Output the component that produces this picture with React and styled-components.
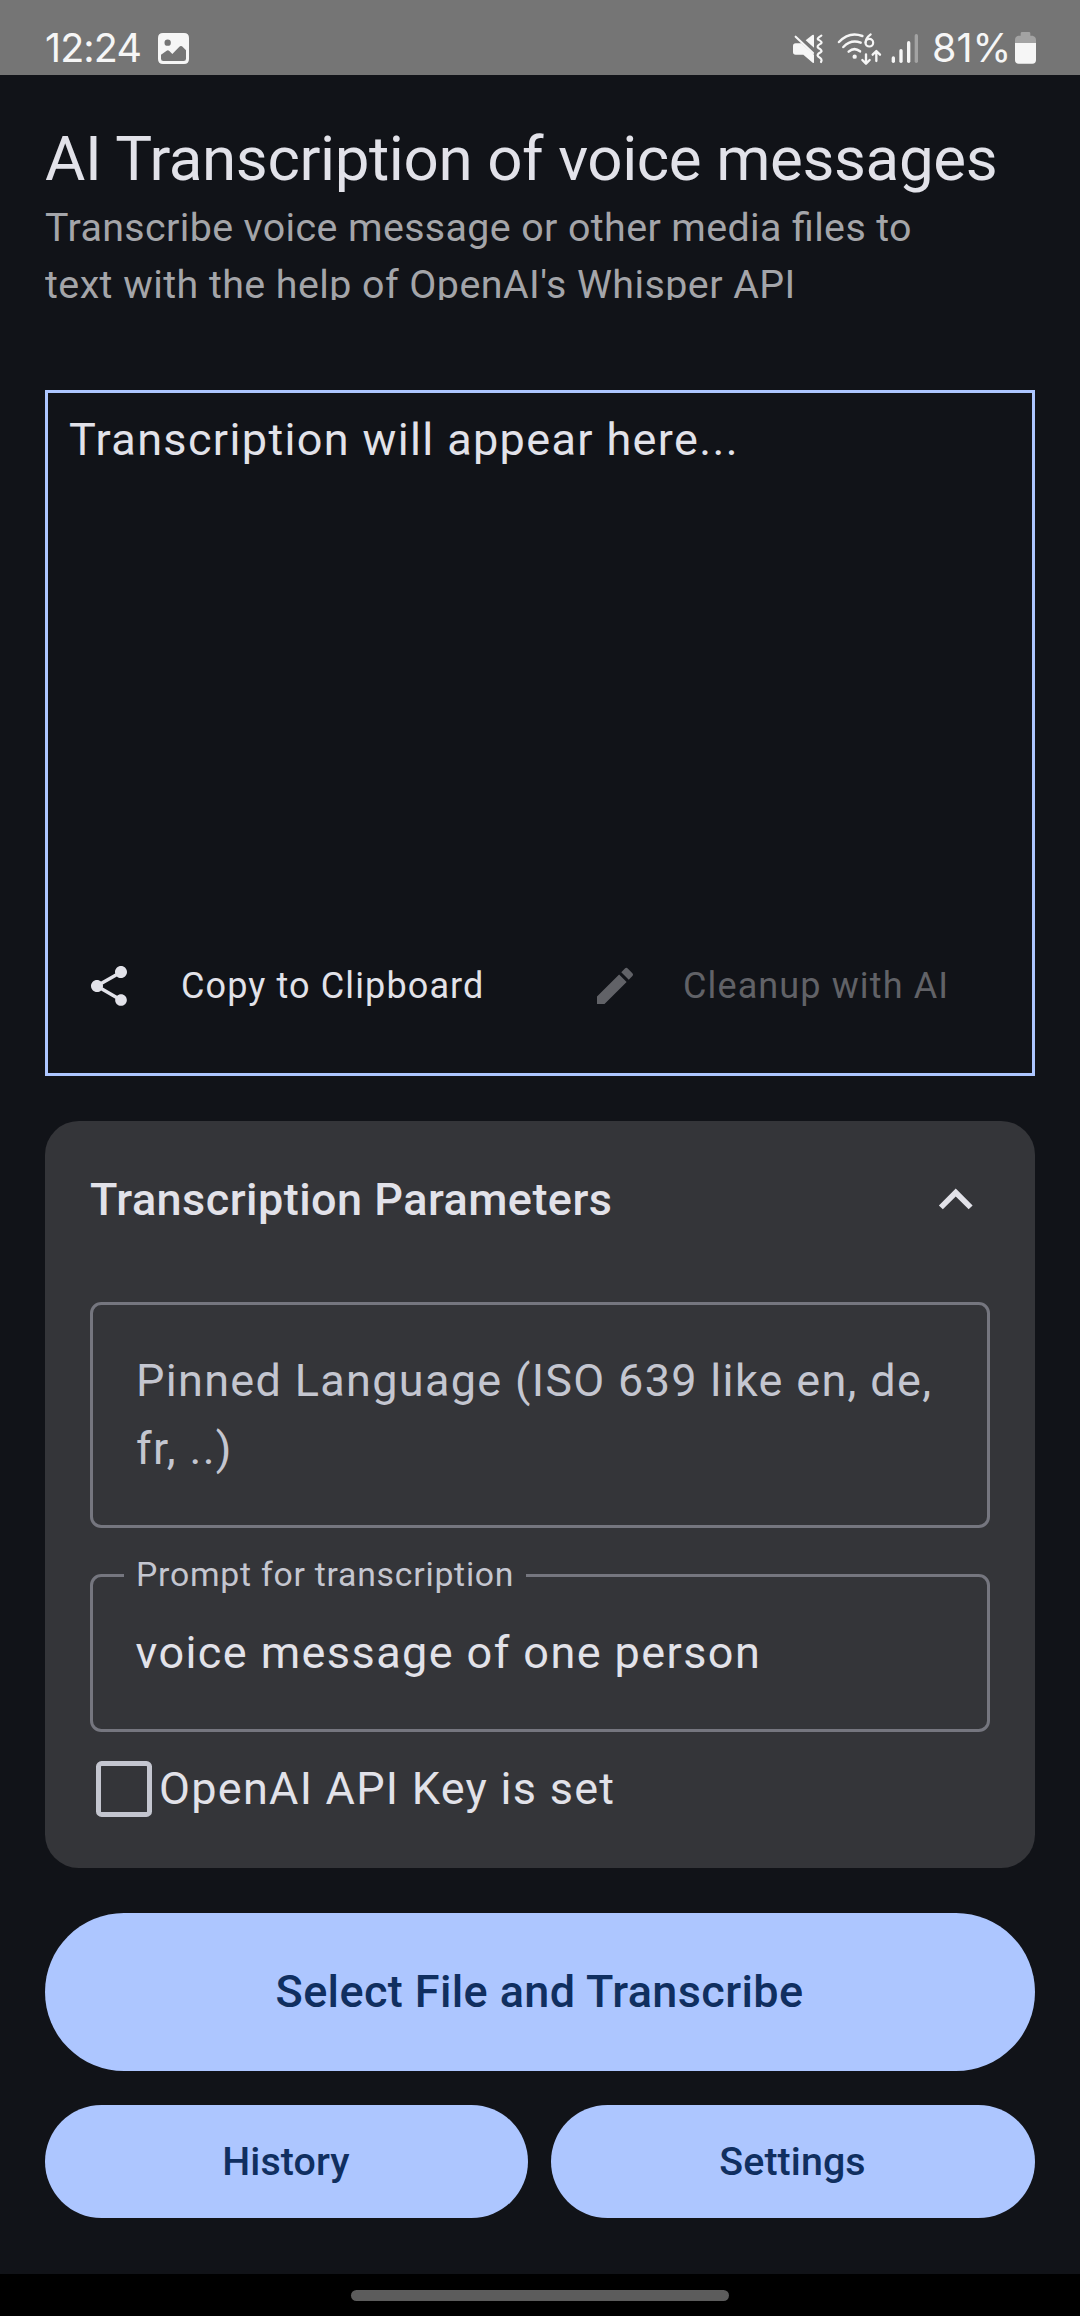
import React from "react";
import styled, { createGlobalStyle } from "styled-components";
import { MdShare, MdEdit, MdExpandLess } from "react-icons/md";

const Global = createGlobalStyle`
  * { box-sizing: border-box; }
  body { margin: 0; background: #111318; }
`;

const Screen = styled.div`
  width: 1080px;
  height: 2316px;
  display: flex;
  flex-direction: column;
  background: #111318;
  color: #e2e2e9;
  font-family: Roboto, "Noto Sans", sans-serif;
  overflow: hidden;
`;

const StatusBar = styled.header`
  height: 75px;
  flex: none;
  background: #757575;
  color: #f6f6f6;
  display: flex;
  align-items: flex-start;
  padding: 32px 43px 0 45px;
  font-family: Inter, Roboto, sans-serif;
`;

const StatusText = styled.span`
  font-size: 39.5px;
  line-height: 32px;
  letter-spacing: ${(p) => p.$spacing}px;
  width: ${(p) => p.$width}px;
  margin-left: ${(p) => p.$gap || 0}px;
  white-space: nowrap;
`;

const Glyph = styled.svg`
  display: block;
  flex: none;
  width: ${(p) => p.$w}px;
  height: 34px;
  margin-left: ${(p) => p.$gap || 0}px;
`;

const Spacer = styled.div`
  flex: 1;
`;

const Main = styled.main`
  flex: 1;
  display: flex;
  flex-direction: column;
  padding: 44px 45px 0;
`;

const Title = styled.h1`
  margin: 0;
  font-size: 61.875px;
  font-weight: 400;
  line-height: 80px;
  letter-spacing: -0.38px;
  white-space: nowrap;
`;

const Subtitle = styled.p`
  margin: 0;
  height: 101px;
  overflow: hidden;
  color: #a4a5a9;
  font-size: 39.375px;
  line-height: 57px;
`;

const SubtitleLine = styled.span`
  display: block;
  letter-spacing: ${(p) => p.$spacing}px;
  font-feature-settings: "liga" 1;
  white-space: nowrap;
`;

const Output = styled.section`
  margin-top: 90px;
  height: 686px;
  flex: none;
  border: 3px solid #adc6ff;
  padding: 13px 20px 0 21px;
  display: flex;
  flex-direction: column;
  justify-content: space-between;
`;

const BodyText = styled.div`
  font-size: 45px;
  line-height: 68px;
  letter-spacing: ${(p) => p.$spacing}px;
  white-space: nowrap;
`;

const Actions = styled.div`
  display: flex;
  align-items: center;
  height: 68px;
  margin-bottom: 53px;
`;

const Action = styled.button`
  border: 0;
  background: none;
  padding: 0 0 0 ${(p) => p.$inset}px;
  width: ${(p) => p.$width}px;
  display: flex;
  align-items: center;
  gap: ${(p) => p.$gap}px;
  color: ${(p) => (p.$muted ? "#616267" : "#e2e2e9")};
  font: 400 36px/54px Roboto, sans-serif;
  letter-spacing: 1.12px;
  white-space: nowrap;
  svg { flex: none; }
`;

const Card = styled.section`
  margin-top: 45px;
  height: 747px;
  flex: none;
  border-radius: 33.75px;
  background: #343539;
  padding: 45px 45px 0;
`;

const CardHeader = styled.div`
  display: flex;
  align-items: center;
  justify-content: space-between;
  height: 68px;
  padding-right: 1px;
`;

const CardTitle = styled.h2`
  margin: 0;
  font-size: 45px;
  font-weight: 500;
  line-height: 68px;
  letter-spacing: 0.46px;
`;

const Field = styled.fieldset`
  margin: ${(p) => p.$top}px 0 0;
  min-width: 0;
  height: ${(p) => p.$height}px;
  border: 3px solid #75767f;
  border-radius: 11.25px;
  padding: ${(p) => p.$pad}px 31px 0 ${(p) => (p.$placeholder ? 43 : 42.5)}px;
  font-size: 45px;
  line-height: 67.5px;
  letter-spacing: ${(p) => (p.$placeholder ? 1.32 : 1.42)}px;
  color: ${(p) => (p.$placeholder ? "#c4c6d0" : "#e2e2e9")};
`;

const Legend = styled.legend`
  margin-left: -11.5px;
  padding: 0 12px 2px 12px;
  font-size: 33.75px;
  line-height: 43px;
  letter-spacing: 0.76px;
  color: #c4c6d0;
`;

const CheckRow = styled.label`
  display: flex;
  align-items: center;
  margin: 23px 0 0 6px;
  height: 68px;
  gap: 7px;
`;

const Box = styled.span`
  width: 56px;
  height: 56px;
  border: 5px solid #c4c6d0;
  border-radius: 5.6px;
`;

const Button = styled.button`
  border: 0;
  border-radius: 79px;
  background: #adc6ff;
  color: #102f60;
  height: ${(p) => (p.$large ? 158 : 113)}px;
  flex: none;
  margin-top: ${(p) => (p.$large ? 45 : 0)}px;
  padding: 0 1px ${(p) => (p.$large ? 2 : 0)}px 0;
  font: 500 ${(p) => (p.$large ? 45 : 39.375)}px Roboto, sans-serif;
  letter-spacing: ${(p) => (p.$large ? 0.38 : 0.1)}px;
`;

const ButtonRow = styled.div`
  display: grid;
  grid-template-columns: 483px 484px;
  gap: 23px;
  margin-top: 34px;
`;

const NavBar = styled.footer`
  height: 42px;
  flex: none;
  background: #000;
  display: flex;
  justify-content: center;
  padding-top: 16px;
`;

const Handle = styled.div`
  width: 378px;
  height: 11px;
  border-radius: 5.5px;
  background: #5c5c5c;
`;

const Photo = () => (
  <Glyph $w={32} $gap={16} viewBox="474 96 96 102">
    <path
      fill="#f6f6f6"
      fillRule="evenodd"
      d="M489 99H552Q567 99 567 114V177Q567 192 552 192H489Q474 192 474 177V114Q474 99 489 99ZM503 118.500A9.500 9.500 0 1 0 503 137.500A9.500 9.500 0 1 0 503 118.500ZM483 164V176Q483 183 490 183H551Q558 183 558 176V151L546 139Q542 136 538 140L517 162L508 153Q504 149 500 152Z"
    />
  </Glyph>
);

const Muted = () => (
  <Glyph $w={32} viewBox="66 96 96 102">
    <g fill="#f6f6f6">
      <path d="M77 130H94L132 164V187Q132 191 128 188L100 164H77Q69 164 69 156V138Q69 130 77 130Z" />
      <path d="M107 121L127 105Q132 102 132 107V143Z" />
    </g>
    <g fill="none" stroke="#f6f6f6" strokeWidth="6.500" strokeLinecap="round" strokeLinejoin="round">
      <path d="M77 110L129 159" />
      <path d="M154 107Q139 116 145 119Q160 127 152 131Q138 139 145 144Q160 152 152 157Q138 164 145 170Q159 178 153 186" />
    </g>
  </Glyph>
);

const Wifi = () => (
  <Glyph $w={46} $gap={13} viewBox="201 96 138 102">
    <g fill="none" stroke="#f6f6f6" strokeWidth="7.500" strokeLinecap="round" strokeLinejoin="round">
      <path d="M207 126Q238 93 277 108" />
      <path d="M220 141Q243 117 272 128" />
      <path d="M236 155Q253 140 270 154" />
      <path strokeWidth="6.500" d="M302 103Q286 115 287 128" />
      <circle strokeWidth="6.500" cx="298" cy="128" r="11.500" />
      <path strokeWidth="7" d="M288 163V190M277 180L288 191L299 180" />
      <path strokeWidth="7" d="M319 183V154M308 164L319 153L330 164" />
    </g>
    <circle cx="254" cy="170" r="6.500" fill="#f6f6f6" />
  </Glyph>
);

const Signal = () => (
  <Glyph $w={28} $gap={8} viewBox="362 96 84 102">
    <g stroke="#f6f6f6" strokeWidth="10" strokeLinecap="round">
      <path d="M369 174V184" />
      <path d="M392 152V184" />
      <path d="M415 128V184" />
      <path d="M438 107V184" stroke="#a3a3a3" />
    </g>
  </Glyph>
);

const Battery = () => (
  <Glyph $w={22} viewBox="735 96 66 102">
    <path fill="#a3a3a3" d="M757 96H777Q781 96 781 100V107H788Q798 110 798 120V130H735V120Q735 110 745 107H752V100Q752 96 757 96Z" />
    <path fill="#f6f6f6" d="M735 129H798V180Q798 191 787 191H746Q735 191 735 180Z" />
  </Glyph>
);

export default function App() {
  return (
    <Screen>
      <Global />
      <StatusBar>
        <StatusText $spacing={-0.9} $width={97}>12:24</StatusText>
        <Photo />
        <Spacer />
        <Muted />
        <Wifi />
        <Signal />
        <StatusText $spacing={0} $width={83} $gap={13}>81%</StatusText>
        <Battery />
      </StatusBar>
      <Main>
        <Title>AI Transcription of voice messages</Title>
        <Subtitle>
          <SubtitleLine $spacing={0.39}>Transcribe voice message or other media files to</SubtitleLine>
          <SubtitleLine $spacing={0.45}>text with the help of OpenAI's Whisper API</SubtitleLine>
        </Subtitle>
        <Output>
          <BodyText $spacing={1.36}>Transcription will appear here...</BodyText>
          <Actions>
            <Action $inset={16} $width={522} $gap={48}>
              <MdShare size={48} />
              Copy to Clipboard
            </Action>
            <Action $inset={0} $width={370} $gap={44} $muted>
              <MdEdit size={48} />
              Cleanup with AI
            </Action>
          </Actions>
        </Output>
        <Card>
          <CardHeader>
            <CardTitle>Transcription Parameters</CardTitle>
            <MdExpandLess size={67.5} />
          </CardHeader>
          <Field $top={68} $height={226} $pad={42} $placeholder>
            Pinned Language (ISO 639 like en, de, fr, ..)
          </Field>
          <Field $top={25} $height={179} $pad={21}>
            <Legend>Prompt for transcription</Legend>
            voice message of one person
          </Field>
          <CheckRow>
            <Box />
            <BodyText $spacing={1.27}>OpenAI API Key is set</BodyText>
          </CheckRow>
        </Card>
        <Button $large>Select File and Transcribe</Button>
        <ButtonRow>
          <Button>History</Button>
          <Button>Settings</Button>
        </ButtonRow>
      </Main>
      <NavBar>
        <Handle />
      </NavBar>
    </Screen>
  );
}
